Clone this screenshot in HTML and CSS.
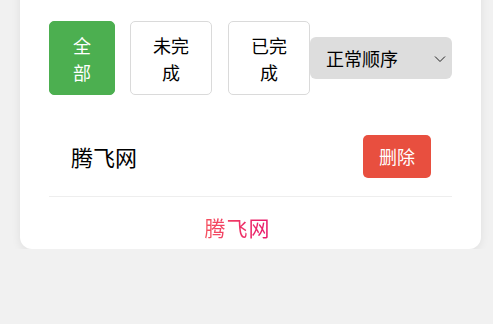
FILE: index.html
```html
<!DOCTYPE html>
<html lang="zh-CN">
<head>
<meta charset="utf-8">
<title>腾飞网</title>
<link rel="stylesheet" href="styles.css">
</head>
<body>
<div class="card">
  <div class="toolbar">
    <button class="filter-btn active w-all">全部</button>
    <button class="filter-btn w-mid">未完成</button>
    <button class="filter-btn w-last">已完成</button>
    <div class="select-wrap">
      <select class="order-select">
        <option>正常顺序</option>
        <option>倒序</option>
      </select>
      <svg class="chevron" width="12" height="8" viewBox="0 0 12 8"><path d="M1 1.5 L6 6.5 L11 1.5" fill="none" stroke="#222" stroke-width="1"/></svg>
    </div>
  </div>
  <ul class="list">
    <li class="item">
      <span class="item-text">腾飞网</span>
      <button class="del-btn">删除</button>
    </li>
  </ul>
  <div class="footer"><span class="brand">腾飞网</span></div>
</div>
</body>
</html>
```
FILE: styles.css
```css
* { box-sizing: border-box; }
html, body {
  margin: 0;
  padding: 0;
  background: #f1f1f1;
  font-family: "Noto Sans CJK SC", "Noto Sans", sans-serif;
  color: #000;
}
body { padding: 0 12px 0 20px; }
.card {
  background: #fff;
  margin-top: -20px;
  border-radius: 12px;
  padding: 41px 29px 7px 29px;
  box-shadow: 0 2px 10px rgba(0, 0, 0, 0.08);
}
.toolbar {
  display: flex;
  align-items: center;
}
.filter-btn {
  font-family: inherit;
  font-size: 18px;
  line-height: 27px;
  padding: 10px 20px;
  height: 74px;
  background: #fff;
  color: #000;
  border: 1px solid #dadada;
  border-radius: 5px;
  flex: none;
  text-align: center;
}
.filter-btn.active {
  background: #4caf50;
  border-color: #4caf50;
  color: #fff;
}
.w-all { width: 66px; margin-right: 15px; }
.w-mid { width: 82px; margin-right: 16px; }
.w-last { width: 82px; }
.select-wrap {
  position: relative;
  width: 142px;
  height: 42px;
  flex: none;
}
.order-select {
  appearance: none;
  -webkit-appearance: none;
  width: 100%;
  height: 100%;
  border: none;
  border-radius: 6px;
  background: #dddddd;
  font-family: inherit;
  font-size: 18px;
  color: #000;
  padding: 0 0 0 16px;
  outline: none;
}
.chevron {
  position: absolute;
  right: 6px;
  top: 18px;
  pointer-events: none;
}
.list {
  list-style: none;
  margin: 20px 0 0 0;
  padding: 0;
}
.item {
  display: flex;
  align-items: center;
  justify-content: space-between;
  padding: 20px 21px 18px 22px;
  border-bottom: 1px solid #eeeeee;
}
.item-text {
  font-size: 22px;
  line-height: 30px;
  margin-top: -2px;
}
.del-btn {
  font-family: inherit;
  font-size: 18px;
  line-height: 23px;
  padding: 10px 16px;
  height: 43px;
  width: 68px;
  border: none;
  border-radius: 5px;
  background: #e84f3f;
  color: #fff;
}
.footer {
  text-align: center;
  padding: 15px 26px 0 0;
}
.brand {
  font-size: 21px;
  line-height: 30px;
  letter-spacing: 1px;
  background: linear-gradient(90deg, #f5515f, #e8176d);
  -webkit-background-clip: text;
  background-clip: text;
  color: transparent;
}
```
